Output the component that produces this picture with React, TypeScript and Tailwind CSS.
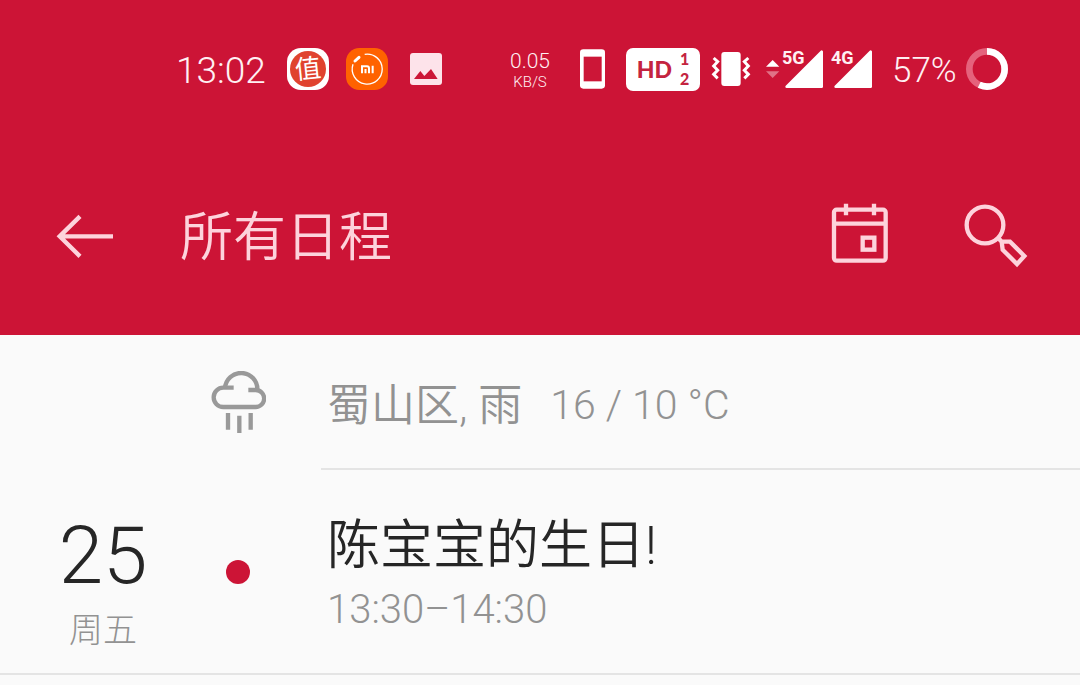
import type { ReactNode } from "react";

function DealsAppIcon() {
  return (
    <span className="flex size-[42px] items-center justify-center rounded-[14px] bg-white">
      <span className="flex size-9 items-center justify-center rounded-full bg-[#e0432f] text-[26px] leading-none text-white">
        <span className="-rotate-6">值</span>
      </span>
    </span>
  );
}

function MiAppIcon() {
  return (
    <svg viewBox="0 0 126 126" className="size-[42px]" fill="none" aria-hidden="true">
      <rect width="126" height="126" rx="40" fill="#ff6200" />
      <path d="M56 19a45 45 0 1 1-35 30" stroke="#fff" strokeWidth="4" />
      <path d="M27 39L39 28" stroke="#fff" strokeWidth="9" strokeLinecap="round" />
      <path d="M48 76V55H63Q69 55 69 61V76M58.500 63V76M80 53V76" stroke="#fff" strokeWidth="6" />
    </svg>
  );
}

function PictureIcon() {
  return (
    <svg viewBox="0 0 96 96" className="size-8" aria-hidden="true">
      <rect width="96" height="96" rx="9" fill="#fde3ea" />
      <path d="M12 78L31 54L43 69L63 48L83 78Z" fill="#cc1637" />
    </svg>
  );
}

function PhoneIcon() {
  return (
    <svg viewBox="0 0 75 120" className="h-10 w-[25px]" aria-hidden="true">
      <rect y="1" width="75" height="118" rx="10" fill="#fff" />
      <rect x="11" y="23" width="54" height="74" fill="#cc1637" />
    </svg>
  );
}

function VibrateIcon() {
  return (
    <svg viewBox="0 0 114 102" className="h-[34px] w-[38px] overflow-visible" fill="none" aria-hidden="true">
      <rect x="25" width="58" height="102" rx="9" fill="#fff" />
      <path
        d="M2 18L14 29L2 42L14 55L2 67L14 79M106 18L94 29L106 42L94 55L106 67L94 79"
        stroke="#fff"
        strokeWidth="9"
      />
    </svg>
  );
}

function DataArrows() {
  return (
    <svg viewBox="0 0 42 54" className="h-[18px] w-[14px]" fill="#fff" aria-hidden="true">
      <path d="M0 20L20 0L40 20Z" />
      <path d="M0 34L20 54L40 34Z" opacity="0.400" />
    </svg>
  );
}

function Signal({ label }: { label: string }) {
  return (
    <span className="relative flex h-[38px] w-10 justify-end">
      <svg viewBox="0 0 114 114" className="size-[38px]" aria-hidden="true">
        <path d="M5 110L110 5V110Z" fill="#fff" stroke="#fff" strokeWidth="8" strokeLinejoin="round" />
      </svg>
      <span className="absolute top-0 -left-px text-[18px] leading-4 font-bold">{label}</span>
    </span>
  );
}

function BatteryRing() {
  return (
    <svg viewBox="0 0 126 126" className="size-[42px] -rotate-90" fill="none" strokeWidth="20" aria-hidden="true">
      <circle cx="63" cy="63" r="53" stroke="#e5627c" />
      <circle cx="63" cy="63" r="53" stroke="#fff" pathLength="100" strokeDasharray="57 43" />
    </svg>
  );
}

function StatusBar() {
  return (
    <div className="flex h-[138px] items-center justify-between pr-[72px] pl-[176px] text-[#fff0f3]">
      <div className="flex items-center">
        <time className="w-[111px] pt-0.5 text-[37px] leading-none font-light">13:02</time>
        <DealsAppIcon />
        <span className="w-[17px]" />
        <MiAppIcon />
        <span className="w-[22px]" />
        <PictureIcon />
      </div>
      <div className="flex items-center">
        <div className="mr-7 flex w-11 flex-col items-center pt-0.5 font-light">
          <span className="text-[21px] leading-[23px]">0.05</span>
          <span className="text-[15px] leading-[18px]">KB/S</span>
        </div>
        <PhoneIcon />
        <div className="mr-[13px] ml-[21px] flex h-[43px] w-[74px] items-center justify-center gap-2 rounded-[7px] bg-white font-['Lato'] font-black text-[#c4243f]">
          <span className="text-[23px] leading-none">HD</span>
          <span className="flex flex-col text-base leading-5">
            <span>1</span>
            <span>2</span>
          </span>
        </div>
        <VibrateIcon />
        <span className="w-[15px]" />
        <DataArrows />
        <span className="w-[3px]" />
        <Signal label="5G" />
        <span className="w-[9px]" />
        <Signal label="4G" />
        <span className="mr-3 ml-5 w-[62px] pt-0.5 text-[35px] leading-none font-light">57%</span>
        <BatteryRing />
      </div>
    </div>
  );
}

function IconButton({ label, children }: { label: string; children: ReactNode }) {
  return (
    <button type="button" aria-label={label} className="flex size-16 cursor-pointer items-center justify-center">
      {children}
    </button>
  );
}

function Toolbar() {
  return (
    <div className="flex h-[197px] items-center pr-[52px] pl-[53px] text-[#fdd3dc]">
      <IconButton label="返回">
        <svg viewBox="0 0 192 192" className="size-16" fill="none" stroke="currentColor" strokeWidth="13" aria-hidden="true">
          <path d="M180 94H20M81 34L20 94L81 154" />
        </svg>
      </IconButton>
      <h1 className="ml-[63px] pt-1 text-[53px] leading-none font-[350]">所有日程</h1>
      <div className="ml-auto flex items-center gap-[72px]">
        <IconButton label="日历">
          <svg viewBox="0 0 192 192" className="size-16 overflow-visible" fill="none" stroke="currentColor" strokeWidth="13" aria-hidden="true">
            <rect x="18" y="14" width="155" height="153" rx="8" />
            <path d="M18 56H173M54 -4V31M138 -4V31" />
            <rect x="104" y="98" width="35" height="36" />
          </svg>
        </IconButton>
        <IconButton label="搜索">
          <svg viewBox="0 0 192 192" className="size-16 overflow-visible" fill="none" stroke="currentColor" strokeWidth="13" aria-hidden="true">
            <circle cx="63" cy="60" r="55" />
            <path d="M102 98L113 110M113 110H138L181 153L159 177L116 134Z" />
          </svg>
        </IconButton>
      </div>
    </div>
  );
}

function RainIcon() {
  return (
    <svg viewBox="0 0 168 192" className="h-16 w-14" fill="none" stroke="#999" strokeWidth="13" aria-hidden="true">
      <path d="M71 50H40A29 29 0 0 0 40 108H137A25.500 25.500 0 0 0 137 57H115" />
      <path d="M45 52A48.500 48.500 0 0 1 142 57" />
      <path d="M54 126V176M88 134V186M122 126V176" />
    </svg>
  );
}

export default function App() {
  return (
    <div className="min-h-screen bg-[#fafafa] font-['Roboto','Noto_Sans_CJK_SC',sans-serif] text-[#262626]">
      <header className="bg-[#cc1436]">
        <StatusBar />
        <Toolbar />
      </header>
      <main>
        <section className="grid grid-cols-[206px_64px_1fr]">
          <div className="col-start-2 flex items-center justify-center">
            <RainIcon />
          </div>
          <p className="ml-[51px] flex h-[135px] items-center gap-7 border-b-2 border-[#e4e4e4] pt-2 pl-[6px] text-[41px] leading-none font-[350] text-[#929292]">
            <span className="text-[44px]">蜀山区, 雨</span>
            <span className="font-light">16 / 10 °C</span>
          </p>
        </section>
        <section className="grid h-[205px] grid-cols-[206px_64px_1fr] border-b-2 border-[#e4e4e4]">
          <div className="flex flex-col items-center pt-[46px]">
            <span className="text-[80px] leading-[80px] font-[350]">25</span>
            <span className="mt-4 text-[34px] leading-9 font-light text-[#929292]">周五</span>
          </div>
          <div className="flex items-center justify-center">
            <span className="size-6 rounded-full bg-[#cc1436]" />
          </div>
          <div className="ml-[51px] pt-11 pl-[6px]">
            <h2 className="text-[53px] leading-[64px] font-[350]">陈宝宝的生日!</h2>
            <p className="mt-2 text-[40px] leading-[48px] font-light text-[#929292]">13:30–14:30</p>
          </div>
        </section>
      </main>
    </div>
  );
}
